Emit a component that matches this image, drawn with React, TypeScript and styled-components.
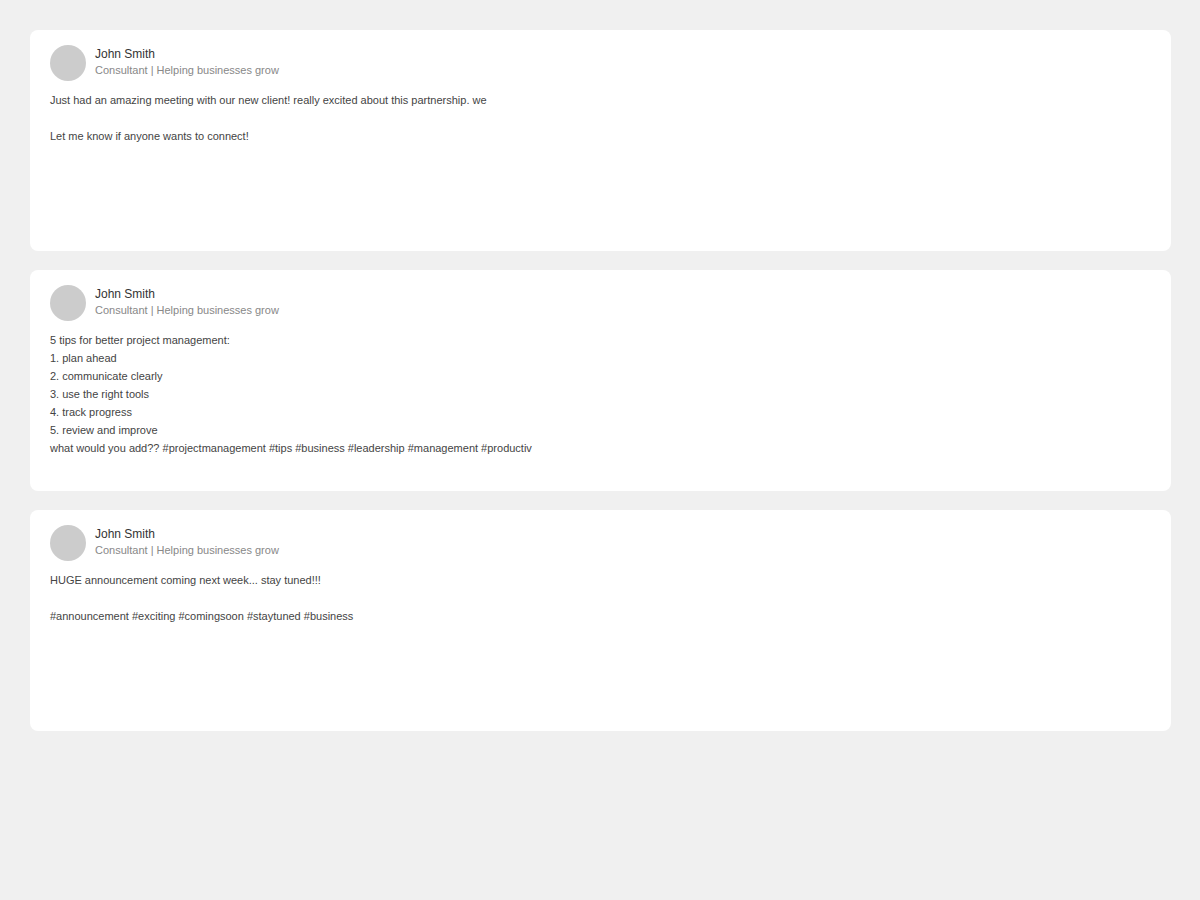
import React from "react";
import styled, { createGlobalStyle } from "styled-components";

const GlobalStyle = createGlobalStyle`
  * { box-sizing: border-box; }
  body {
    margin: 0;
    background: #f0f0f0;
    color: #333333;
    font-family: "Liberation Sans", Arial, sans-serif;
  }
`;

const Feed = styled.main`
  display: flex;
  flex-direction: column;
  gap: 19px;
  padding: 30px 29px 30px 30px;
`;

const Card = styled.article`
  min-height: 221px;
  padding: 15px 20px;
  border-radius: 8px;
  background: #ffffff;
`;

const Header = styled.header`
  display: flex;
  gap: 9px;
`;

const Avatar = styled.div`
  flex: none;
  width: 36px;
  height: 36px;
  border-radius: 50%;
  background: #cccccc;
`;

const Name = styled.h2`
  margin: 0;
  font-size: 12px;
  font-weight: 400;
  line-height: 18px;
`;

const Headline = styled.p`
  margin: 0;
  color: #888888;
  font-size: 11px;
  line-height: 14px;
`;

const Body = styled.p`
  margin: 10px 0 0;
  color: #444444;
  font-size: 11px;
  line-height: 18px;
  white-space: pre-line;
`;

const posts: string[] = [
  `Just had an amazing meeting with our new client! really excited about this partnership. we

Let me know if anyone wants to connect!`,
  `5 tips for better project management:
1. plan ahead
2. communicate clearly
3. use the right tools
4. track progress
5. review and improve
what would you add?? #projectmanagement #tips #business #leadership #management #productiv`,
  `HUGE announcement coming next week... stay tuned!!!

#announcement #exciting #comingsoon #staytuned #business`,
];

export default function App() {
  return (
    <>
      <GlobalStyle />
      <Feed>
        {posts.map((text) => (
          <Card key={text}>
            <Header>
              <Avatar />
              <div>
                <Name>John Smith</Name>
                <Headline>Consultant | Helping businesses grow</Headline>
              </div>
            </Header>
            <Body>{text}</Body>
          </Card>
        ))}
      </Feed>
    </>
  );
}
